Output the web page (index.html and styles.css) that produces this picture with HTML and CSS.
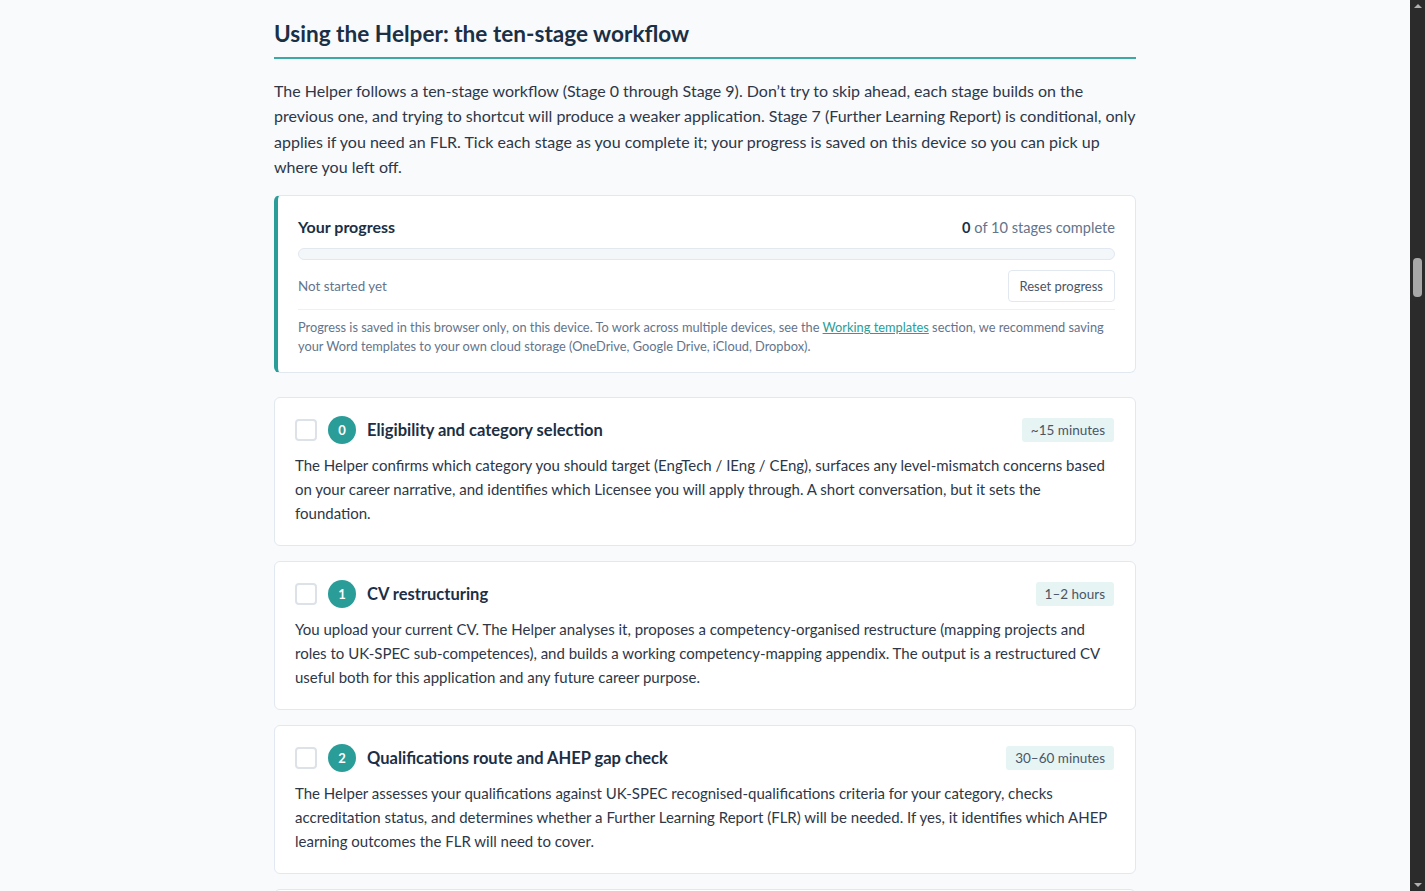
FILE: index.html
```html
<!DOCTYPE html>
<html lang="en">
<head>
<meta charset="utf-8">
<title>Using the Helper</title>
<link rel="stylesheet" href="styles.css">
</head>
<body>
<main class="page">
  <section class="section">
    <h2 class="section-title">Using the Helper: the ten-stage workflow</h2>
    <p class="lead">The Helper follows a ten-stage workflow (Stage 0 through Stage 9). Don’t try to skip ahead, each stage builds on the previous one, and trying to shortcut will produce a weaker application. Stage 7 (Further Learning Report) is conditional, only applies if you need an FLR. Tick each stage as you complete it; your progress is saved on this device so you can pick up where you left off.</p>

    <div class="progress-card">
      <div class="progress-head">
        <span class="progress-title">Your progress</span>
        <span class="progress-count"><strong>0</strong> of 10 stages complete</span>
      </div>
      <div class="progress-track"><div class="progress-fill" style="width:0%"></div></div>
      <div class="progress-foot">
        <span class="progress-status">Not started yet</span>
        <button class="reset-btn" type="button">Reset progress</button>
      </div>
      <p class="progress-note">Progress is saved in this browser only, on this device. To work across multiple devices, see the <a href="#templates">Working templates</a> section, we recommend saving your Word templates to your own cloud storage (OneDrive, Google Drive, iCloud, Dropbox).</p>
    </div>

    <ol class="stages">
      <li class="stage">
        <div class="stage-head">
          <span class="check"></span>
          <span class="num">0</span>
          <h3 class="stage-title">Eligibility and category selection</h3>
          <span class="time">~15 minutes</span>
        </div>
        <p class="stage-text">The Helper confirms which category you should target (EngTech / IEng / CEng), surfaces any level-mismatch concerns based on your career narrative, and identifies which Licensee you will apply through. A short conversation, but it sets the foundation.</p>
      </li>
      <li class="stage">
        <div class="stage-head">
          <span class="check"></span>
          <span class="num">1</span>
          <h3 class="stage-title">CV restructuring</h3>
          <span class="time">1–2 hours</span>
        </div>
        <p class="stage-text">You upload your current CV. The Helper analyses it, proposes a competency-organised restructure (mapping projects and roles to UK-SPEC sub-competences), and builds a working competency-mapping appendix. The output is a restructured CV useful both for this application and any future career purpose.</p>
      </li>
      <li class="stage">
        <div class="stage-head">
          <span class="check"></span>
          <span class="num">2</span>
          <h3 class="stage-title">Qualifications route and AHEP gap check</h3>
          <span class="time">30–60 minutes</span>
        </div>
        <p class="stage-text">The Helper assesses your qualifications against UK-SPEC recognised-qualifications criteria for your category, checks accreditation status, and determines whether a Further Learning Report (FLR) will be needed. If yes, it identifies which AHEP learning outcomes the FLR will need to cover.</p>
      </li>
      <li class="stage">
        <div class="stage-head">
          <span class="check"></span>
          <span class="num">3</span>
          <h3 class="stage-title">Evidence planning</h3>
          <span class="time">1–2 hours</span>
        </div>
        <p class="stage-text">Working from your restructured CV, the Helper selects the projects and roles that give the strongest evidence for each competence area and plans where each one will be used.</p>
      </li>
    </ol>
  </section>
</main>

<div class="scroll-rail" aria-hidden="true">
  <span class="rail-arrow up"></span>
  <span class="rail-track"><span class="rail-thumb"></span></span>
  <span class="rail-arrow down"></span>
</div>
</body>
</html>
```

FILE: styles.css
```css
html {
  background: #f8fafc;
}

body {
  margin: 0;
  padding-right: 15px;
  background: #f8fafc;
  color: #2d3748;
  font-family: "Lato", "Noto Sans", sans-serif;
}

.page {
  max-width: 862px;
  margin: 0 auto;
  padding: 19px 0 40px;
}

.section-title {
  margin: 0 0 19px;
  padding-bottom: 8px;
  border-bottom: 2px solid #3ba9a5;
  font-size: 22.6px;
  font-weight: 700;
  line-height: 30px;
  color: #1b2f45;
}

.lead {
  margin: 0 0 16px;
  font-size: 16px;
  line-height: 25.3px;
  color: #2d3748;
}

/* progress summary */
.progress-card {
  background: #fff;
  border: 1px solid #e2e8f0;
  border-left: 4px solid #2a9d99;
  border-radius: 6px;
  padding: 21px 20px 16px 20px;
}

.progress-head {
  display: flex;
  justify-content: space-between;
  align-items: baseline;
}

.progress-title {
  font-size: 16px;
  font-weight: 700;
  color: #1b2f45;
}

.progress-count {
  font-size: 14.6px;
  color: #64748b;
}
.progress-count strong {
  color: #1b2f45;
  font-weight: 700;
}

.progress-track {
  margin-top: 12px;
  height: 10px;
  border: 1px solid #e2e8f0;
  border-radius: 6px;
  background: #f4f7fa;
  overflow: hidden;
}
.progress-fill {
  height: 100%;
  background: #2a9d99;
}

.progress-foot {
  display: flex;
  justify-content: space-between;
  align-items: center;
  margin-top: 10px;
  padding-bottom: 7px;
  border-bottom: 1px solid #edf1f5;
}

.progress-status {
  font-size: 13.4px;
  color: #64748b;
}

.reset-btn {
  font: inherit;
  font-size: 13px;
  color: #4a5568;
  background: #fff;
  border: 1px solid #e2e8f0;
  border-radius: 4px;
  padding: 7px 11px 6px;
  line-height: 17px;
}

.progress-note {
  margin: 8px 0 0;
  font-size: 12.8px;
  line-height: 19px;
  color: #64748b;
}
.progress-note a {
  color: #2a9d99;
}

/* stage list */
.stages {
  list-style: none;
  margin: 24px 0 0;
  padding: 0;
  display: flex;
  flex-direction: column;
  gap: 15px;
}

.stage {
  background: #fff;
  border: 1px solid #e2e8f0;
  border-radius: 6px;
  padding: 18px 21px 20px 20px;
}

.stage-head {
  display: flex;
  align-items: center;
}

.check {
  width: 22px;
  height: 22px;
  box-sizing: border-box;
  border: 2px solid #dde2e8;
  border-radius: 4px;
  background: #fff;
  flex: none;
  margin-right: 11px;
}

.num {
  width: 28px;
  height: 28px;
  border-radius: 50%;
  background: #2a9d99;
  color: #fff;
  font-size: 13px;
  font-weight: 700;
  display: flex;
  align-items: center;
  justify-content: center;
  flex: none;
  margin-right: 11px;
}

.stage-title {
  margin: 0;
  flex: 1;
  font-size: 16.5px;
  font-weight: 700;
  color: #1b2f45;
}

.time {
  background: #e6f4f3;
  color: #4a5568;
  font-size: 13.5px;
  line-height: 16px;
  padding: 4px 9px;
  border-radius: 3px;
}

.stage-text {
  margin: 9px 0 0;
  font-size: 15px;
  line-height: 24px;
  color: #2d3748;
}

/* window scroll rail, pinned to the right edge */
.scroll-rail {
  position: fixed;
  top: 0;
  right: 0;
  bottom: 0;
  width: 15px;
  background: #2b2b2b;
  display: flex;
  flex-direction: column;
  align-items: center;
}
.rail-arrow {
  flex: none;
  width: 0;
  height: 0;
  margin: 4px 0;
  border-left: 4px solid transparent;
  border-right: 4px solid transparent;
}
.rail-arrow.up {
  border-bottom: 4px solid #b0b0b0;
}
.rail-arrow.down {
  border-top: 4px solid #b0b0b0;
}
.rail-track {
  flex: 1;
  width: 100%;
  display: flex;
  justify-content: center;
  padding-top: 246px;
}
.rail-thumb {
  width: 9px;
  height: 39px;
  border-radius: 4px;
  background: #a8a8a8;
}
```
